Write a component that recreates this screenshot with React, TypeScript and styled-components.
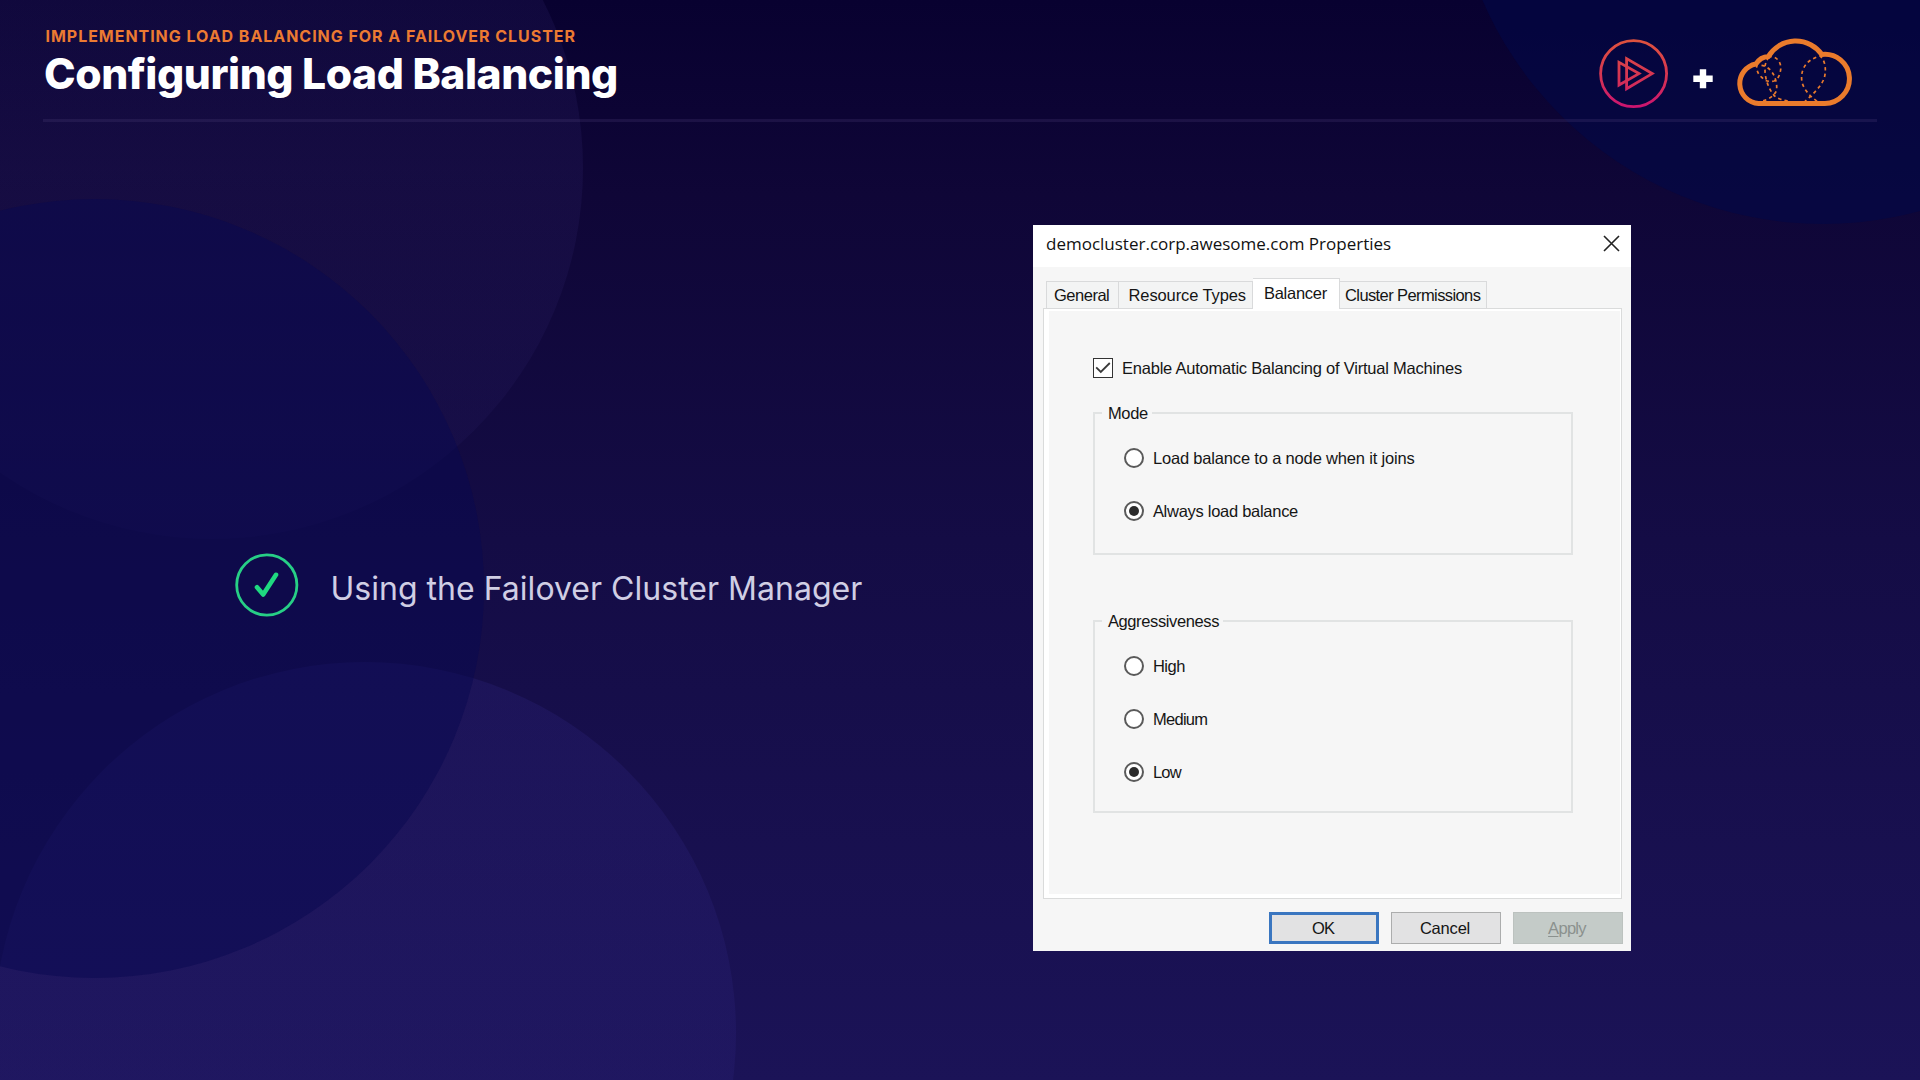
import React from "react";
import styled, { createGlobalStyle, css } from "styled-components";

const GlobalStyle = createGlobalStyle`
  *, *::before, *::after { box-sizing: border-box; }
  html, body { margin: 0; padding: 0; background: #0b0433; }
  svg { display: block; flex: none; }
`;

/* ---------- Slide ---------- */

const Slide = styled.div`
  position: relative;
  isolation: isolate;
  display: flex;
  flex-direction: column;
  width: 1920px;
  height: 1080px;
  overflow: hidden;
  font-family: Inter, "Liberation Sans", sans-serif;
  background: linear-gradient(180deg, #080130 0%, #0f0637 18%, #140c45 50%, #1b1357 100%);
`;

const Orb = styled.div<{ $x: number; $y: number; $r: number; $fill: string }>`
  position: absolute;
  z-index: -1;
  left: ${(p) => p.$x - p.$r}px;
  top: ${(p) => p.$y - p.$r}px;
  width: ${(p) => p.$r * 2}px;
  height: ${(p) => p.$r * 2}px;
  border-radius: 50%;
  background: ${(p) => p.$fill};
`;

const Header = styled.header`
  display: flex;
  justify-content: space-between;
  align-items: flex-start;
  height: 122px;
  margin: 0 43px;
  border-bottom: 3px solid rgba(74, 58, 120, 0.27);
`;

const Headings = styled.div`
  display: flex;
  flex-direction: column;
  padding: 26px 0 0 2px;
`;

const Eyebrow = styled.div`
  padding-left: 0.5px;
  font-size: 16px;
  line-height: 20px;
  font-weight: 700;
  letter-spacing: 0.96px;
  white-space: nowrap;
  color: #ec7a32;
`;

const Title = styled.h1`
  margin: 2px 0 0 -1px;
  font-size: 42.6px;
  line-height: 52px;
  font-weight: 850;
  letter-spacing: -0.42px;
  white-space: nowrap;
  color: #ffffff;
`;

const Brands = styled.div`
  display: flex;
  align-items: flex-start;
  padding: 35.5px 22.5px 0 0;
`;

const BrandMark = styled.div`
  padding-top: 3.5px;
`;

const Plus = styled.div`
  padding: 33.5px 21.5px 0 24px;
`;

const Body = styled.main`
  display: flex;
  align-items: flex-start;
  padding-top: 103px;
`;

const Point = styled.div`
  display: flex;
  align-items: center;
  width: 1033px;
  margin-top: 327.5px;
  padding-left: 235px;
`;

const PointText = styled.p`
  margin: 8px 0 0 31.5px;
  font-size: 32px;
  line-height: 40px;
  font-weight: 420;
  letter-spacing: 0.02px;
  white-space: nowrap;
  color: #d0cee4;
`;

/* ---------- Dialog ---------- */

const Dialog = styled.section`
  display: flex;
  flex-direction: column;
  width: 598px;
  height: 726px;
  background: #f6f6f6;
  color: #151515;
  font-family: "Liberation Sans", Arial, sans-serif;
  font-size: 16.5px;
  line-height: 20px;
`;

const TitleBar = styled.div`
  display: flex;
  justify-content: space-between;
  height: 42px;
  padding: 7px 11px 0 13px;
  background: #ffffff;
`;

const DialogTitle = styled.div`
  font-family: "Open Sans", "Noto Sans", sans-serif;
  font-size: 17px;
  line-height: 24px;
  white-space: nowrap;
  color: #111111;
`;

const Close = styled.div`
  padding-top: 3px;
`;

const Tabs = styled.div`
  display: flex;
  align-items: flex-end;
  height: 42px;
  margin-bottom: -1px;
  padding-left: 12.5px;
  z-index: 1;
`;

const Tab = styled.div<{ $width: number; $pad: number; $active?: boolean }>`
  width: ${(p) => p.$width}px;
  height: 28px;
  padding: 3px 0 0 ${(p) => p.$pad}px;
  border: solid #d9dadb;
  border-width: 1px 1px 1px 0;
  background: #f3f4f4;
  &:first-child {
    border-left-width: 1px;
  }
  ${(p) =>
    p.$active &&
    css`
      height: 31px;
      padding-top: 4px;
      border-bottom: 0;
      background: #ffffff;
    `}
`;

const Label = styled.span<{ $track?: number }>`
  letter-spacing: ${(p) => p.$track ?? 0}px;
  white-space: nowrap;
`;

const Pane = styled.div`
  display: flex;
  flex-direction: column;
  width: 579px;
  height: 591px;
  margin-left: 10px;
  padding: 44px 0 0 46.5px;
  border: 1.5px solid #dadbdb;
  background: #f6f6f6;
  box-shadow: inset 5px 0 0 #ffffff, inset 0 -4px 0 #ffffff, inset -1px 0 0 #ffffff,
    inset 0 2px 0 #ffffff;
`;

const Option = styled.div`
  display: flex;
  align-items: center;
  gap: 9px;
  height: 30px;
`;

const Checkbox = styled.div`
  display: grid;
  place-items: center;
  width: 20px;
  height: 20px;
  margin-left: 2.5px;
  border: 1.5px solid #333333;
  background: #ffffff;
`;

const Radio = styled.div<{ $on?: boolean }>`
  display: grid;
  place-items: center;
  width: 20px;
  height: 20px;
  border: 2px solid #5a5a5a;
  border-radius: 50%;
  background: #ffffff;
  ${(p) =>
    p.$on &&
    css`
      &::after {
        content: "";
        width: 10px;
        height: 10px;
        border-radius: 50%;
        background: #2b2b2b;
      }
    `}
`;

const Group = styled.fieldset<{ $height: number; $top: number }>`
  display: flex;
  flex-direction: column;
  gap: 23px;
  width: 480px;
  height: ${(p) => p.$height}px;
  min-width: 0;
  margin: ${(p) => p.$top}px 0 0 2.4px;
  padding: 20px 0 0 29px;
  border: 2px solid #e1e3e3;
`;

const Legend = styled.legend`
  height: 20px;
  margin-left: -21.5px;
  padding: 0 4px 0 5.5px;
`;

const Actions = styled.div`
  display: flex;
  gap: 12px;
  padding: 12.5px 0 0 236px;
`;

const Button = styled.div<{ $kind: "primary" | "plain" | "off" }>`
  display: flex;
  align-items: center;
  justify-content: center;
  width: 110px;
  height: 32px;
  padding: 1px 2px 0 0;
  border: 1.5px solid #acadad;
  background: #e2e2e3;
  ${(p) =>
    p.$kind === "primary" &&
    css`
      border: 3px solid #3a76c0;
    `}
  ${(p) =>
    p.$kind === "off" &&
    css`
      border-color: #bcc2bf;
      background: #c4cbc8;
      color: #8b918e;
    `}
`;

const AccessKey = styled.span`
  text-decoration: underline;
  text-underline-offset: 2px;
`;

/* ---------- Drawings ---------- */

const PlayLogo = () => (
  <svg width="70" height="70" viewBox="0 0 70 70" fill="none">
    <defs>
      <linearGradient id="ring" x1="0" y1="0" x2="0" y2="70" gradientUnits="userSpaceOnUse">
        <stop offset="0" stopColor="#df533d" />
        <stop offset="0.55" stopColor="#d53354" />
        <stop offset="1" stopColor="#cb1272" />
      </linearGradient>
    </defs>
    <g stroke="url(#ring)">
      <circle cx="34.6" cy="34.6" r="33" strokeWidth="2.8" />
      <path d="M27.6 19.6V49.8L53.2 34.6Z" strokeWidth="2.8" />
      <path d="M20 23.4V46L40 34.6Z" strokeWidth="2.8" />
    </g>
  </svg>
);

const CloudLogo = () => (
  <svg width="120" height="72" viewBox="0 0 120 72" fill="none" stroke="#ea7b2c">
    <g strokeWidth="1.7" strokeDasharray="3.4 3.2">
      <path d="M33.3 21C41 19 46.5 26 45.7 33C45.3 38 43 44 39 45C34 46 30 45 27.5 42C24 39 21.5 36 21.7 29" />
      <path d="M34 21.3C31 25 29.6 29 30 34C30 42 33 52 39 59.5C43 63 49 64.8 56 65.4" />
      <path d="M26.5 29.3C32 30 36 34 38.5 38.5C41 43 42.5 50 41.3 55C39 60 33 64 26 65.4" />
      <path d="M82 65.4C75 60 69 54 67 46C65 35 70 24 85 20C90 24 91.5 33 89.5 41C87 50 78 58 70 65.4" />
    </g>
    <path
      d="M23.5 67.4A19.9 19.9 0 0 1 20.9 28Q25.5 20.6 33.4 20.4A32 32 0 0 1 86.7 18.4A24.6 24.6 0 1 1 89.6 67.4Z"
      strokeWidth="5"
    />
  </svg>
);

const PlusSign = () => (
  <svg width="20" height="20" viewBox="0 0 20 20" fill="#fff">
    <path d="M6.8 0.2H13.2V6.6H19.7V13H13.2V19.3H6.8V13H0.3V6.6H6.8Z" />
  </svg>
);

const CheckBadge = () => (
  <svg width="64" height="64" viewBox="0 0 64 64" fill="none" stroke="#1fd980">
    <circle cx="31.8" cy="32" r="30.1" strokeWidth="2.8" stroke="#27cf86" />
    <path d="M22 34.2L28.2 41.6L41 21.8" strokeWidth="4.6" strokeLinecap="round" strokeLinejoin="round" />
  </svg>
);

const CloseIcon = () => (
  <svg width="17" height="17" viewBox="0 0 17 17" stroke="#222" strokeWidth="1.6">
    <path d="M1 1L16 16M16 1L1 16" />
  </svg>
);

const Tick = () => (
  <svg width="16" height="12" viewBox="0 0 16 12" fill="none" stroke="#3a3a3a" strokeWidth="1.8">
    <path d="M1.2 5.4L5.8 10L14.8 1" />
  </svg>
);

/* ---------- Content ---------- */

const tabs = [
  { name: "General", width: 73, pad: 7.5, track: -0.49 },
  { name: "Resource Types", width: 134, pad: 10, track: -0.1 },
  { name: "Balancer", width: 87, pad: 11.5, track: -0.28, active: true },
  { name: "Cluster Permissions", width: 147.5, pad: 5.5, track: -0.6 },
];

const modes = [
  { name: "Load balance to a node when it joins", track: -0.17 },
  { name: "Always load balance", track: -0.28, on: true },
];

const levels = [
  { name: "High", track: -0.5 },
  { name: "Medium", track: -0.7 },
  { name: "Low", track: -0.75, on: true },
];

type Choice = { name: string; track: number; on?: boolean };

const Choices = ({ items }: { items: Choice[] }) => (
  <>
    {items.map((item) => (
      <Option key={item.name}>
        <Radio $on={item.on} />
        <Label $track={item.track}>{item.name}</Label>
      </Option>
    ))}
  </>
);

export default function App() {
  return (
    <>
      <GlobalStyle />
      <Slide>
        <Orb $x={212} $y={168} $r={371} $fill="linear-gradient(180deg, rgba(58,46,125,.17) 50%, rgba(58,44,125,.09))" />
        <Orb $x={365} $y={1033} $r={371} $fill="linear-gradient(180deg, rgba(56,46,150,.2), rgba(56,46,150,.15) 60%)" />
        <Orb $x={94.5} $y={588} $r={389.5} $fill="rgba(7,8,80,.5)" />
        <Orb $x={1823} $y={-147} $r={371} $fill="rgba(2,9,72,.58)" />

        <Header>
          <Headings>
            <Eyebrow>IMPLEMENTING LOAD BALANCING FOR A FAILOVER CLUSTER</Eyebrow>
            <Title>Configuring Load Balancing</Title>
          </Headings>
          <Brands>
            <BrandMark>
              <PlayLogo />
            </BrandMark>
            <Plus>
              <PlusSign />
            </Plus>
            <CloudLogo />
          </Brands>
        </Header>

        <Body>
          <Point>
            <CheckBadge />
            <PointText>Using the Failover Cluster Manager</PointText>
          </Point>

          <Dialog>
            <TitleBar>
              <DialogTitle>democluster.corp.awesome.com Properties</DialogTitle>
              <Close>
                <CloseIcon />
              </Close>
            </TitleBar>
            <Tabs>
              {tabs.map((tab) => (
                <Tab key={tab.name} $width={tab.width} $pad={tab.pad} $active={tab.active}>
                  <Label $track={tab.track}>{tab.name}</Label>
                </Tab>
              ))}
            </Tabs>
            <Pane>
              <Option>
                <Checkbox>
                  <Tick />
                </Checkbox>
                <Label $track={-0.22}>Enable Automatic Balancing of Virtual Machines</Label>
              </Option>
              <Group $height={152} $top={20}>
                <Legend>
                  <Label $track={-0.3}>Mode</Label>
                </Legend>
                <Choices items={modes} />
              </Group>
              <Group $height={202} $top={56}>
                <Legend>
                  <Label $track={-0.38}>Aggressiveness</Label>
                </Legend>
                <Choices items={levels} />
              </Group>
            </Pane>
            <Actions>
              <Button $kind="primary">
                <Label $track={-1}>OK</Label>
              </Button>
              <Button $kind="plain">
                <Label $track={-0.2}>Cancel</Label>
              </Button>
              <Button $kind="off">
                <Label $track={-0.7}>
                  <AccessKey>A</AccessKey>pply
                </Label>
              </Button>
            </Actions>
          </Dialog>
        </Body>
      </Slide>
    </>
  );
}
